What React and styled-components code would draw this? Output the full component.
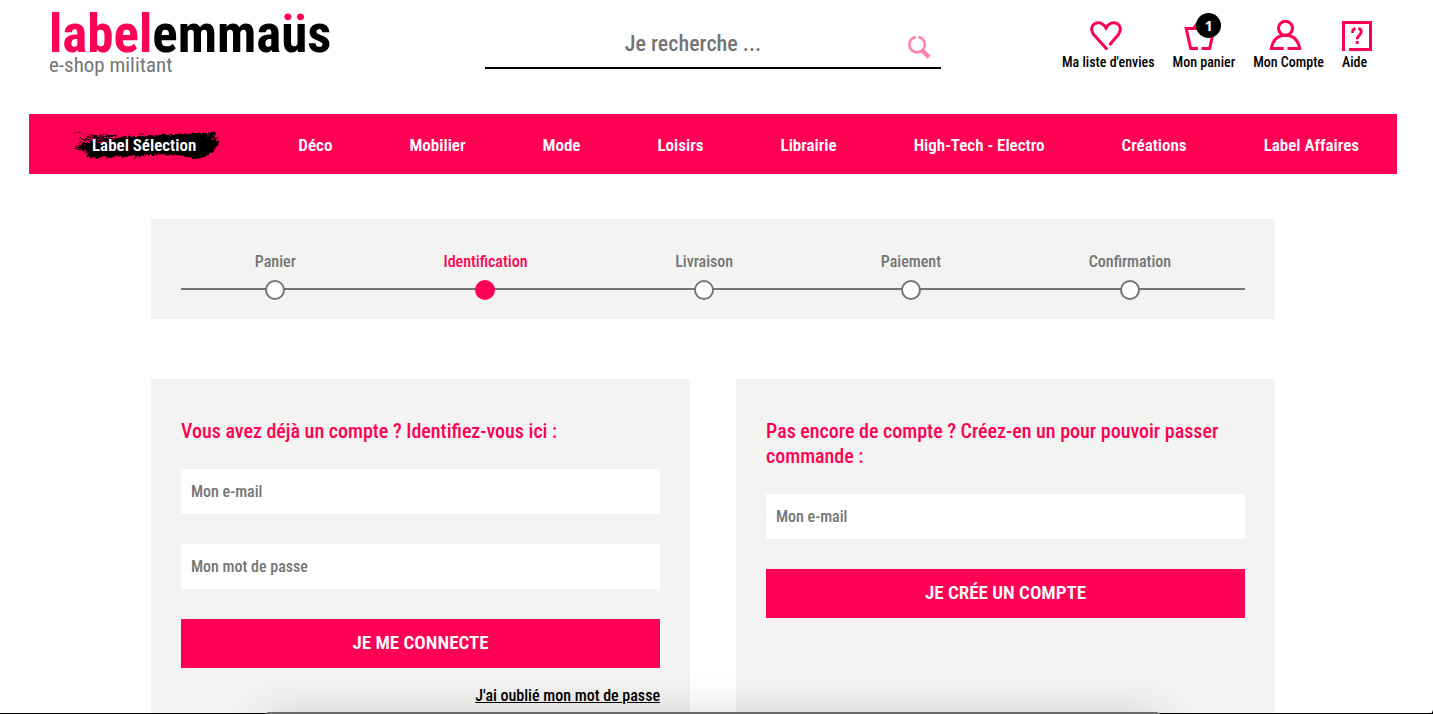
import React, { useState } from 'react';
import styled, { createGlobalStyle } from 'styled-components';


const pink = '#ff0055';
const grey = '#757575';
const light = '#f3f3f1';

const GlobalStyle = createGlobalStyle`
    *, *::before, *::after {
        box-sizing: border-box;
    }

    body {
        margin: 0;
        background: white;
        color: black;
        font-family: 'Roboto Condensed', Roboto, sans-serif;
        font-size: 16px;
        font-weight: 500;
    }

    input, button {
        font: inherit;
        border: none;
        border-radius: 0;
        outline: none;
    }
`

const Page = styled.div`
    padding: 0 36px 0 29px;
`

const Header = styled.header`
    display: grid;
    grid-template-columns: repeat(3, minmax(0, 1fr));
    height: 114px;
`

const Brand = styled.a`
    padding: 13px 0 0 20px;
    color: black;
    text-decoration: none;
`

const BrandName = styled.span`
    display: block;
    font-size: 53px;
    line-height: 43px;
    font-weight: 700;
    white-space: nowrap;
`

const Pink = styled.span`
    color: ${pink};
`

/* pink dots over a black u */
const TwoTone = styled.span`
    background: linear-gradient(${pink} 19px, black 19px);
    background-clip: text;
    -webkit-background-clip: text;
    color: transparent;
`

const Tagline = styled.span`
    display: block;
    color: ${grey};
    font-size: 21px;
    line-height: 18px;
    font-weight: 400;
`

const SearchForm = styled.form`
    display: flex;
    align-items: center;
    align-self: start;
    height: 49px;
    margin-top: 20px;
    border-bottom: 2px solid black;
`

const SearchInput = styled.input`
    flex: 1;
    min-width: 0;
    padding: 0;
    background: transparent;
    font-size: 22px;
    text-align: center;

    &::placeholder {
        color: ${grey};
        opacity: 1;
    }
`

const SearchButton = styled.button`
    display: flex;
    width: 40px;
    padding: 6px 0 0 6px;
    background: none;
    cursor: pointer;
`

const Actions = styled.nav`
    display: flex;
    justify-content: flex-end;
    gap: 18px;
    padding: 19px 25px 0 0;
`

const Action = styled.a`
    display: flex;
    flex-direction: column;
    align-items: ${props => props.$framed ? 'flex-start' : 'center'};
    position: relative;
    min-width: 30px;
    height: 52px;
    color: black;
    font-size: 14px;
    line-height: 18px;
    text-decoration: none;
    white-space: nowrap;

    svg {
        flex: none;
        height: 34px;
        margin-right: ${props => props.$framed ? 0 : '5px'};
    }
`

const Count = styled.span`
    position: absolute;
    top: -6px;
    right: 14px;
    width: 25px;
    border-radius: 50%;
    background: black;
    color: white;
    font-family: 'Open Sans', sans-serif;
    font-size: 14px;
    font-weight: 700;
    line-height: 25px;
    text-align: center;
`

const Menu = styled.nav`
    display: flex;
    justify-content: space-between;
    align-items: center;
    height: 60px;
    padding: 1px 38px 0;
    background: ${pink};
`

const MenuLink = styled.a`
    position: relative;
    padding: ${props => props.$brushed ? '0 25px' : 0};
    color: white;
    font-size: 17px;
    line-height: 28px;
    font-weight: 600;
    text-decoration: none;
    white-space: nowrap;
`

const BrushSvg = styled.svg`
    position: absolute;
    top: 0;
    left: 0;
    width: 100%;
    height: 28px;
    overflow: visible;
`

const MenuText = styled.span`
    position: relative;
`

const Main = styled.main`
    max-width: 1124px;
    margin: 45px auto 0;
`

const StepsBox = styled.section`
    padding: 31px 30px 29px;
    background: ${light};
`

const StepList = styled.ol`
    display: flex;
    justify-content: space-around;
    height: 40px;
    margin: 0;
    padding: 0;
    list-style: none;
    border-bottom: 2px solid ${grey};
`

const Step = styled.li`
    display: flex;
    flex-direction: column;
    align-items: center;
    gap: 6px;
    height: 50px;
    color: ${props => props.$current ? pink : grey};
    line-height: 24px;

    &::after {
        content: '';
        width: 20px;
        height: 20px;
        border: 2px solid currentColor;
        border-radius: 50%;
        background: ${props => props.$current ? pink : 'white'};
    }
`

const Panels = styled.div`
    display: grid;
    grid-template-columns: 1fr 1fr;
    gap: 46px;
    margin-top: 60px;
`

const Panel = styled.form`
    display: flex;
    flex-direction: column;
    gap: 30px;
    padding: 40px 30px 8px;
    background: ${light};
`

const PanelTitle = styled.h2`
    margin: 0 0 -5px;
    color: ${pink};
    font-size: 20px;
    line-height: 25px;
    font-weight: 500;
`

const Field = styled.input`
    width: 100%;
    height: 45px;
    padding: 0 10px;
    background: white;

    &::placeholder {
        color: ${grey};
        opacity: 1;
    }
`

const SubmitButton = styled.button`
    height: 49px;
    padding: 0 0 2px;
    background: ${pink};
    color: white;
    font-size: 19px;
    font-weight: 600;
    text-transform: uppercase;
    cursor: pointer;
`

const ForgotLink = styled.a`
    align-self: flex-end;
    margin-top: -12px;
    color: black;
    line-height: 20px;
`

const DockEdge = styled.div`
    position: fixed;
    left: 0;
    right: 0;
    bottom: 0;
    height: 1px;
    background: black;
`

const Dock = styled.div`
    position: fixed;
    left: 265px;
    right: 273px;
    bottom: -58px;
    height: 60px;
    border-radius: 4px;
    background: #6b6969;
    box-shadow: 0 8px 50px rgba(0, 0, 0, 0.2);
`

const Corner = styled.svg`
    position: fixed;
    right: 0;
    bottom: 0;
`


const menuItems = ['Déco', 'Mobilier', 'Mode', 'Loisirs', 'Librairie', 'High-Tech - Electro', 'Créations', 'Label Affaires'];
const steps = ['Panier', 'Identification', 'Livraison', 'Paiement', 'Confirmation'];

const HeartIcon = () => (
    <svg width="32" height="34" viewBox="0 0 32 34" fill="none" stroke={pink} strokeWidth="3" aria-hidden="true">
        <path d="M17.2 30.5 L3.6 15.5 C0.6 11.7 1.2 6.9 4.5 4.8 C8.6 2.3 13.2 4.1 16 8.9 C18.8 4.1 23.4 2.3 27.5 4.8 C30.8 6.9 31.4 11.7 28.4 15.5 L19.5 26" />
    </svg>
);

const BasketIcon = () => (
    <svg width="36" height="34" viewBox="0 0 36 34" fill="none" stroke={pink} strokeWidth="3" aria-hidden="true">
        <path d="M15 29.5 H7.7 L3.2 9.5 H31 L26.7 29.5 H18.5 M11 9 L16 2.5" />
    </svg>
);

const UserIcon = () => (
    <svg width="34" height="34" viewBox="0 0 34 34" fill="none" stroke={pink} strokeWidth="3" aria-hidden="true">
        <circle cx="16.5" cy="9.3" r="7" />
        <path d="M14.8 29.5 H2.3 C4 21 9.2 16.3 16.5 16.3 C23.8 16.3 29 21 30.7 29.5 H18.5" />
    </svg>
);

const HelpIcon = () => (
    <svg width="30" height="34" viewBox="0 0 30 34" fill="none" stroke={pink} strokeWidth="3" aria-hidden="true">
        <path d="M1.5 32 V3.5 H28.5 V30.5 H7" />
        <path d="M10.6 14 V13 C10.6 10.7 12 9.7 13.4 9.4 M16.3 9.4 C18.4 9.9 19.5 11.3 19.3 13.2 C19.1 15.8 15.2 16.4 15.2 20.3 M15.2 22 V25" strokeWidth="2.8" />
    </svg>
);

const SearchIcon = () => (
    <svg width="24" height="24" viewBox="0 0 24 24" fill="none" stroke="#ff80aa" aria-hidden="true">
        <path d="M8.8 2.1 A7.7 7.7 0 1 0 11.4 2.1" strokeWidth="2.5" />
        <path d="M15 15.3 L22 22.3" strokeWidth="4.2" />
    </svg>
);

const Brush = () => (
    <BrushSvg viewBox="0 0 156 28" preserveAspectRatio="none" aria-hidden="true">
        <filter id="bristle">
            <feTurbulence type="fractalNoise" baseFrequency="0.45" numOctaves="2" seed="4" />
            <feDisplacementMap in="SourceGraphic" scale="4" xChannelSelector="R" yChannelSelector="G" />
        </filter>
        <g filter="url(#bristle)">
            <path d="M22 10 L38 8 L52 7 L55 5.5 L60 6.5 L68 5 L80 5.5 L84 4 L91 4.8 L99 3 L106 4 L115 2.5 L121 3 L129 2 L143 2 L149 0.5 L151 3 L147 5 L153 6 L151 8 L154 10 L153 14 L150 18 L145 22 L139 26 L133 27.5 L125 27 L117 25 L110 24 L102 24.5 L96 23 L88 24 L80 24 L73 25.5 L65 24.5 L58 26.5 L51 25 L44 27 L38 25 L31 27.5 L27 26 L22 27.5 L23 25 L18 26 L23 22 L16 21 L21 19.5 L8 19 L15 17.5 L3 17.5 L15 15.5 L7 15 L19 13.5 L8 11.5 L23 12 Z" />
            <path d="M4 0.5 L18 2.2 L16 2.8 Z M14 3 L35 4.5 L49 4 L53 6 L37 6 Z M17 5 L31 6 L45 8 L29 8 Z M10 7 L22 8 L31 10 L17 9 Z M62 3 L65 3.5 L63 5 Z M74 2 L77 3 L73 4 Z M40 27 L43 27.5 L40 28 Z M66 27 L71 26 L69 28 Z" />
            <path d="M29 11 L45 10 L33 12 Z M141 3 L144 3 L142 6 Z M145 8 L150 7 L147 9 Z" fill={pink} />
        </g>
    </BrushSvg>
);

const App = () => {
    const [query, setQuery] = useState('');

    return (
        <>
            <GlobalStyle />
            <Page>
                <Header>
                    <Brand href="#">
                        <BrandName>
                            <Pink>label</Pink>emma<TwoTone>ü</TwoTone>s
                        </BrandName>
                        <Tagline>e-shop militant</Tagline>
                    </Brand>
                    <SearchForm role="search" onSubmit={e => e.preventDefault()}>
                        <SearchInput
                            aria-label="Je recherche"
                            placeholder="Je recherche ..."
                            value={query}
                            onChange={e => setQuery(e.target.value)} />
                        <SearchButton aria-label="Rechercher"><SearchIcon /></SearchButton>
                    </SearchForm>
                    <Actions>
                        <Action href="#"><HeartIcon />Ma liste d'envies</Action>
                        <Action href="#"><BasketIcon />Mon panier<Count>1</Count></Action>
                        <Action href="#"><UserIcon />Mon Compte</Action>
                        <Action href="#" $framed><HelpIcon />Aide</Action>
                    </Actions>
                </Header>

                <Menu>
                    <MenuLink href="#" $brushed><Brush /><MenuText>Label Sélection</MenuText></MenuLink>
                    {menuItems.map(item => <MenuLink href="#" key={item}>{item}</MenuLink>)}
                </Menu>

                <Main>
                    <StepsBox>
                        <StepList>
                            {steps.map(step => (
                                <Step key={step} $current={step === 'Identification'}>{step}</Step>
                            ))}
                        </StepList>
                    </StepsBox>

                    <Panels>
                        <Panel onSubmit={e => e.preventDefault()}>
                            <PanelTitle>Vous avez déjà un compte ? Identifiez-vous ici :</PanelTitle>
                            <Field type="email" aria-label="Mon e-mail" placeholder="Mon e-mail" />
                            <Field type="password" aria-label="Mon mot de passe" placeholder="Mon mot de passe" />
                            <SubmitButton>Je me connecte</SubmitButton>
                            <ForgotLink href="#">J'ai oublié mon mot de passe</ForgotLink>
                        </Panel>
                        <Panel onSubmit={e => e.preventDefault()}>
                            <PanelTitle>Pas encore de compte ? Créez-en un pour pouvoir passer commande :</PanelTitle>
                            <Field type="email" aria-label="Mon e-mail" placeholder="Mon e-mail" />
                            <SubmitButton>Je crée un compte</SubmitButton>
                        </Panel>
                    </Panels>
                </Main>
            </Page>
            <DockEdge />
            <Dock />
            <Corner width="5" height="5" viewBox="0 0 5 5" aria-hidden="true">
                <path d="M5 0 V5 H0 C3 5 5 3 5 0 Z" />
            </Corner>
        </>
    );
};


export default App;
